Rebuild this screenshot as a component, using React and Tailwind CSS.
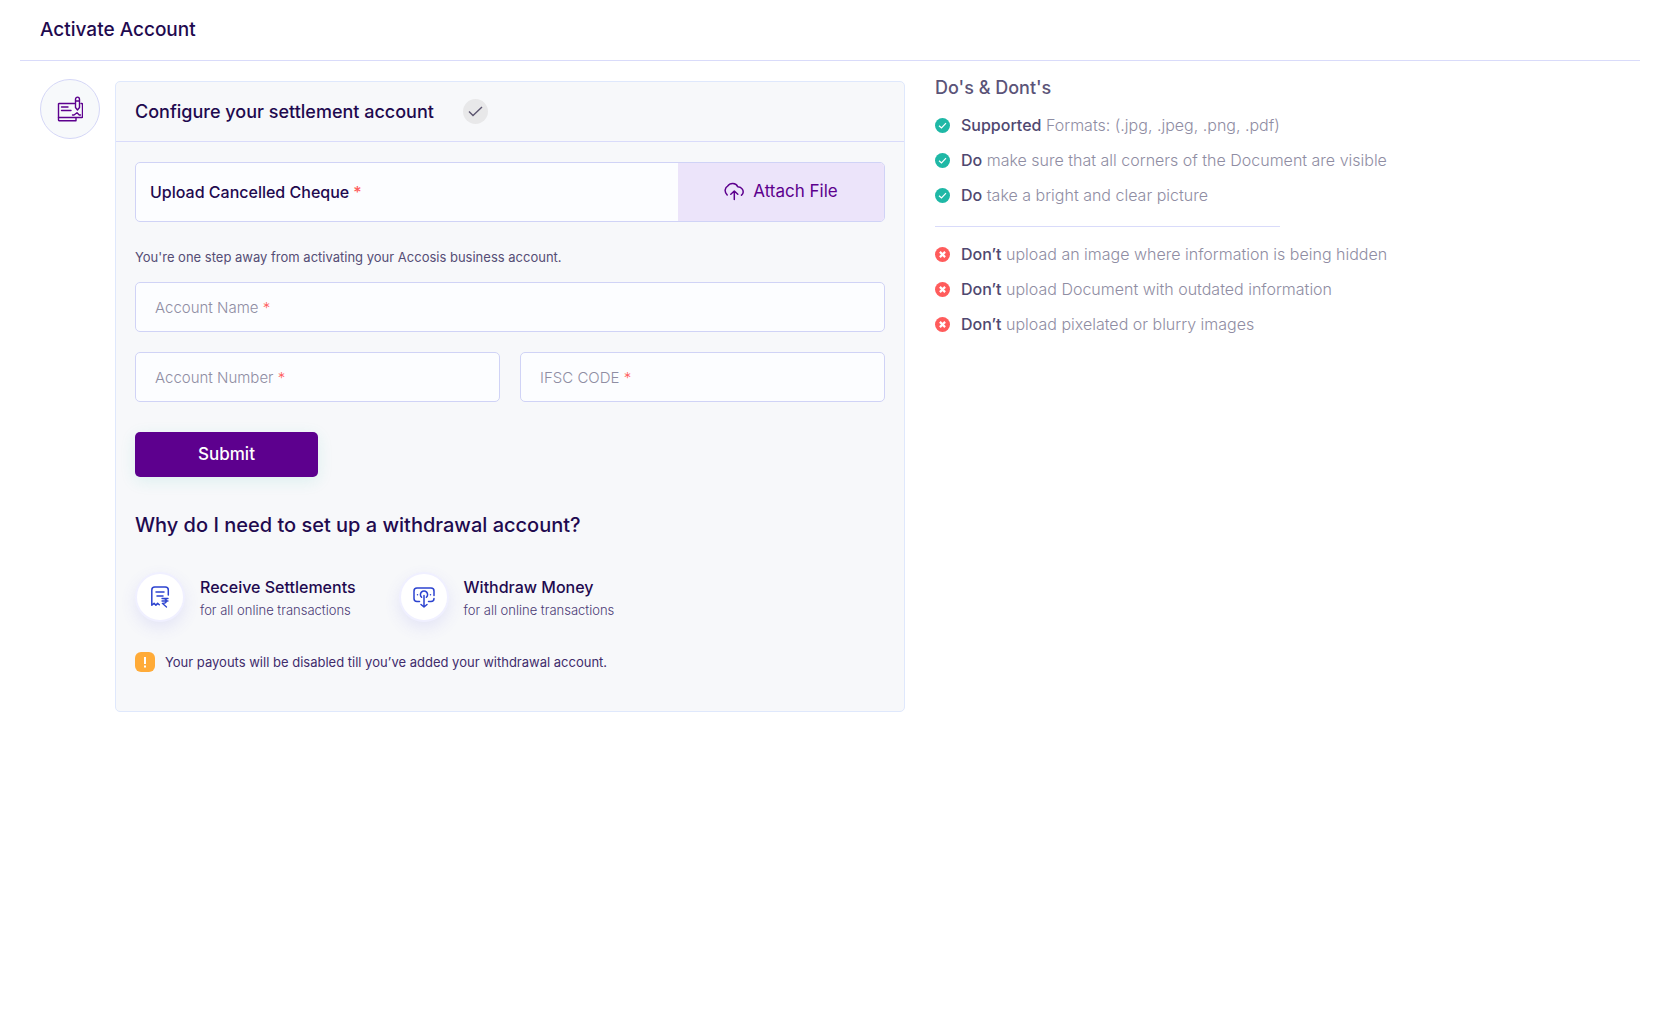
import React from "react";

const ChequeIcon = () => (
  <svg className="w-[26px] h-[26px]" viewBox="0 0 26 26" fill="none" stroke="#5d008e" strokeWidth="1.400" strokeLinecap="round" strokeLinejoin="round">
    <path d="M17.500 7.500H2c-.4 0-.5.200-.5.500v16c0 .5.200.700.6.700H19v-2.500" />
    <path d="M1.500 21.500H25c.4 0 .5-.2.500-.5V8c0-.4-.2-.5-.5-.5h-1" />
    <path d="M4.500 11H11M4.500 14.500h9.500" />
    <path d="M18.500 3.500c0-3.200 4-3.200 4 0v8l-2 2.500-2-2.500zM18.500 5h4" />
    <path d="M15.500 19h1.500l3-2.300 2.300 2.300H23.500" />
  </svg>
);

const UploadIcon = () => (
  <svg className="w-5 h-5" viewBox="0 0 20 20" fill="none" stroke="currentColor" strokeWidth="1.500" strokeLinecap="round" strokeLinejoin="round">
    <path d="M3.200 13C-.3 9.500 1.200 5.500 3.600 4.200 6 .5 12 .600 13.700 4.700 18 5 20 8.600 18.800 11.500c-.3.700-.7 1.200-1.300 1.700" />
    <path d="M10.300 17.500V9.300M6.800 12.200 10.300 9l3.500 3.200" />
  </svg>
);

const SettlementIcon = () => (
  <svg className="w-6 h-6" viewBox="0 0 24 24" fill="none" stroke="#2c43cf" strokeWidth="1.500" strokeLinecap="round" strokeLinejoin="round">
    <path d="M20.300 10V5c0-2-1-3-3-3H6.800c-2 0-3 1-3 3v15.300l2.300-2 1.800 2 1.700-2 1.700 1.500" />
    <path d="M8 7h8M9 11h6" />
    <path d="M14 13.500h6M14 16h6M15 13.500c4.500 0 4.500 4.800 0 4.800h-.7l4.200 3.700" strokeWidth="1.300" />
  </svg>
);

const WithdrawIcon = () => (
  <svg className="w-6 h-6" viewBox="0 0 24 24" fill="none" stroke="#2c43cf" strokeWidth="1.500" strokeLinecap="round" strokeLinejoin="round">
    <path d="M7.500 16.500H5c-2 0-3-1-3-3V6c0-2 1-3 3-3h14c2 0 3 1 3 3v4.500M22 13.500c0 2-1 3-3 3h-2.500" />
    <path d="M9.600 12.300a3.600 3.600 0 1 1 4.800 0" />
    <path d="M12 10.500V21.500M9 19.500l3 2.500 3-2.500" />
    <path d="M5.500 9.700v.1M18.500 9.700v.1" />
  </svg>
);

const DoIcon = () => (
  <svg className="w-[15px] h-[15px] shrink-0" viewBox="0 0 15 15" fill="none">
    <circle cx="7.500" cy="7.500" r="7.500" fill="#1fb8a6" />
    <path d="M4 7.700 6.500 10l4.500-4.800" stroke="#fff" strokeWidth="1.200" />
  </svg>
);

const DontIcon = () => (
  <svg className="w-[15px] h-[15px] shrink-0" viewBox="0 0 15 15" fill="none">
    <circle cx="7.500" cy="7.500" r="7.500" fill="#ff5c5c" />
    <path d="m4.900 4.900 5.200 5.200M10.100 4.900l-5.200 5.200" stroke="#fff" strokeWidth="2.200" />
  </svg>
);

const Field = ({ id, label }) => (
  <div className="flex items-center h-[50px] px-[19px] bg-[#fcfdff] border border-[#d0d3f6] rounded-[5px]">
    <label htmlFor={id} className="pt-[2px] text-[15px] font-light text-[#8f8da3] whitespace-nowrap">
      {label} <span className="text-[#ff5c5c]">*</span>
    </label>
    <input id={id} type="text" required className="flex-1 min-w-0 h-full pl-2 bg-transparent outline-none text-[15px]" />
  </div>
);

const Reason = ({ icon, title }) => (
  <div className="flex items-center gap-[15px]">
    <div className="w-[50px] h-[50px] rounded-full bg-white border-2 border-[#f0f0ff] shadow-[0_6px_16px_rgba(93,93,220,0.12)] flex items-center justify-center">
      {icon}
    </div>
    <div className="pt-[2px]">
      <h3 className="text-base leading-6 font-medium text-[#1f0a4f]">{title}</h3>
      <p className="text-[13px] leading-[22px] font-light text-[#4a3a75]">for all online transactions</p>
    </div>
  </div>
);

const Tip = ({ icon, lead, children }) => (
  <li className="flex items-center gap-[11px] text-base leading-5 font-light text-[#8f8da3]">
    {icon}
    <p className="pb-px">
      <strong className="font-medium text-[#4f4870]">{lead}</strong> {children}
    </p>
  </li>
);

const App = () => {
  return (
    <div className="min-h-screen bg-white px-5 pb-10 font-['Inter',sans-serif] text-[#1f0a4f]">
      <header className="h-[61px] px-5 flex items-center border-b border-[#d9dbfa]">
        <h1 className="text-[19px] font-medium">Activate Account</h1>
      </header>

      <main className="pl-5 pt-[18px] grid grid-cols-[60px_minmax(0,79fr)_minmax(0,72fr)] gap-x-[15px] items-start">
        <div className="w-[60px] h-[60px] rounded-full bg-[#f7f9fb] border border-[#d5d7f7] flex items-center justify-center">
          <ChequeIcon />
        </div>

        {/* Settlement account card */}
        <section className="mt-[2px] bg-[#f7f8fa] border border-[#dfe8fc] rounded-[5px]">
          <div className="h-[60px] px-[19px] flex items-center gap-[29px] border-b border-[#d9dbfa]">
            <h2 className="text-lg font-medium">Configure your settlement account</h2>
            <span className="w-[25px] h-[25px] rounded-full bg-[#e8e8e9] flex items-center justify-center">
              <svg className="w-[15px] h-[11px]" viewBox="0 0 15 11" fill="none" stroke="#5b556f" strokeWidth="1.400">
                <path d="M1 5.500 5 9.500 14 1" />
              </svg>
            </span>
          </div>

          <form className="px-[19px] pt-5 pb-[39px]" onSubmit={(e) => e.preventDefault()}>
            <div className="flex h-[60px] bg-[#fcfdff] border border-[#d0d3f6] rounded-[5px] overflow-hidden">
              <p className="flex-1 flex items-center gap-1 pl-[14px] pb-px text-base font-medium">
                Upload Cancelled Cheque <span className="text-[#ff5c5c]">*</span>
              </p>
              <button type="button" className="w-[206px] flex items-center justify-center gap-[9px] bg-[#ece4fa] text-[#5d008e] text-[17px]">
                <UploadIcon />
                Attach File
              </button>
            </div>

            <p className="mt-[25px] text-[13px] leading-5 text-[#554d75]">
              You're one step away from activating your Accosis business account.
            </p>

            <div className="mt-[15px] grid gap-5">
              <Field id="account-name" label="Account Name" />
              <div className="grid grid-cols-2 gap-5">
                <Field id="account-number" label="Account Number" />
                <Field id="ifsc-code" label="IFSC CODE" />
              </div>
            </div>

            <button type="submit" className="mt-[30px] w-[183px] h-[45px] block rounded-[5px] bg-[#5d008e] text-white text-[17px] font-medium shadow-[0_4px_16px_rgba(31,184,166,0.12)]">
              Submit
            </button>

            <h2 className="mt-8 text-xl leading-8 font-medium">Why do I need to set up a withdrawal account?</h2>

            <div className="mt-[31px] flex flex-wrap gap-[43px]">
              <Reason icon={<SettlementIcon />} title="Receive Settlements" />
              <Reason icon={<WithdrawIcon />} title="Withdraw Money" />
            </div>

            <div className="mt-[30px] flex items-center gap-[10px]">
              <span className="w-5 h-5 rounded-md bg-[#ffab38] flex items-center justify-center">
                <svg className="w-1 h-[11px]" viewBox="0 0 4 11" fill="#fff">
                  <path d="M1 0h2v7H1zM1 8.500h2v2H1z" />
                </svg>
              </span>
              <p className="text-[13px] leading-5 text-[#3f2c6c]">
                Your payouts will be disabled till you’ve added your withdrawal account.
              </p>
            </div>
          </form>
        </section>

        {/* Upload guidelines */}
        <aside className="pl-[15px]">
          <h2 className="text-lg leading-[18px] font-medium text-[#5b5478]">Do's &amp; Dont's</h2>
          <ul className="mt-[18px] grid gap-[14px]">
            <Tip icon={<DoIcon />} lead="Supported">Formats: (.jpg, .jpeg, .png, .pdf)</Tip>
            <Tip icon={<DoIcon />} lead="Do">make sure that all corners of the Document are visible</Tip>
            <Tip icon={<DoIcon />} lead="Do">take a bright and clear picture</Tip>
          </ul>
          <hr className="mt-5 mb-[17px] w-[49%] border-[#d9dbfa]" />
          <ul className="grid gap-[14px]">
            <Tip icon={<DontIcon />} lead="Don’t">upload an image where information is being hidden</Tip>
            <Tip icon={<DontIcon />} lead="Don’t">upload Document with outdated information</Tip>
            <Tip icon={<DontIcon />} lead="Don’t">upload pixelated or blurry images</Tip>
          </ul>
        </aside>
      </main>
    </div>
  );
};

export default App;
